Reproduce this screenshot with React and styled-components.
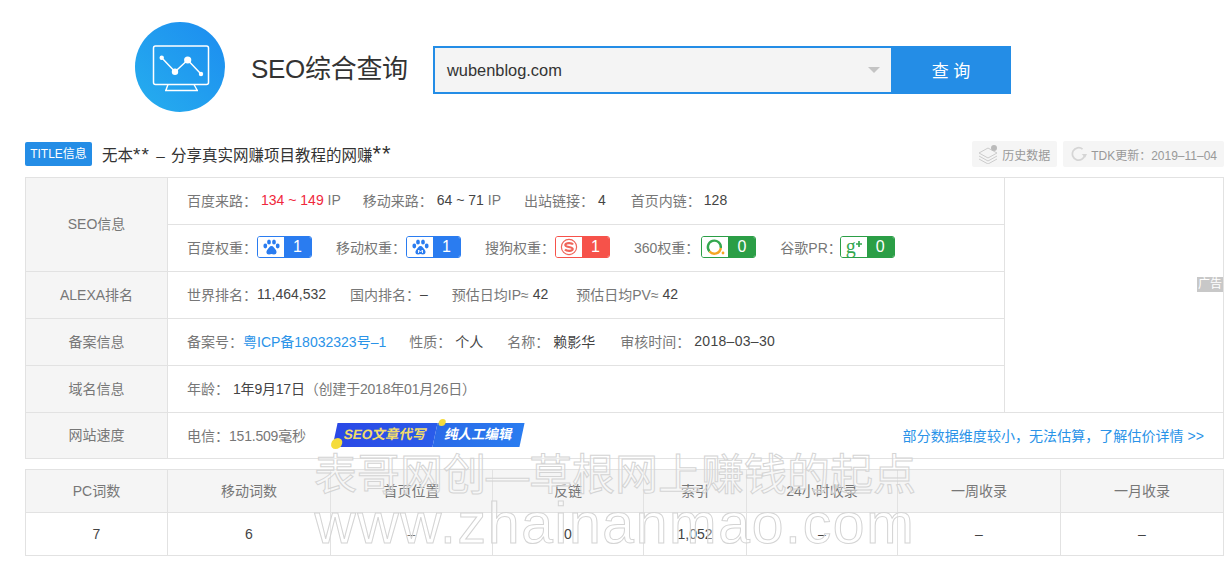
import React from "react";
import styled, { createGlobalStyle } from "styled-components";

const GlobalStyle = createGlobalStyle`
  html, body { margin: 0; padding: 0; background: #fff; }
  body {
    font-family: "Liberation Sans", "Noto Sans CJK SC", sans-serif;
    font-size: 14px;
    color: #666;
  }
`;

const Page = styled.div`
  position: relative;
  width: 1227px;
  height: 561px;
  overflow: hidden;
`;

const Header = styled.header`
  display: flex;
  align-items: center;
  height: 90px;
  padding: 22px 0 0 135px;
`;

const Logo = styled.div`
  width: 90px;
  height: 90px;
  border-radius: 50%;
  background: linear-gradient(45deg, #26aeee 0%, #1c8cf0 100%);
  display: flex;
  align-items: center;
  justify-content: center;
  flex-shrink: 0;
`;

const SiteTitle = styled.h1`
  margin: 3px 26px 0;
  width: 156px;
  font-size: 26px;
  line-height: 32px;
  font-weight: 400;
  color: #333;
  white-space: nowrap;
  letter-spacing: -0.3px;
`;

const SearchBar = styled.div`
  display: flex;
  width: 578px;
  height: 48px;
  margin-top: 6px;
`;

const SearchInput = styled.div`
  position: relative;
  box-sizing: border-box;
  flex: 1;
  display: flex;
  align-items: center;
  padding-left: 12px;
  border: 2px solid #248de6;
  border-right: 0;
  background: #f4f4f4;
  font-size: 16.4px;
  color: #333;
`;

const Caret = styled.span`
  position: absolute;
  right: 11px;
  top: 19px;
  border-style: solid;
  border-width: 6px 6.5px 0;
  border-color: #c4c4c4 transparent transparent;
`;

const SearchButton = styled.div`
  width: 120px;
  display: flex;
  align-items: center;
  justify-content: center;
  padding-bottom: 2px;
  box-sizing: border-box;
  background: #248de6;
  color: #fff;
  font-size: 17px;
`;

const TitleRow = styled.div`
  display: flex;
  align-items: center;
  height: 26px;
  margin: 29px 3px 10px 25px;
`;

const TitleTag = styled.span`
  width: 67px;
  height: 24px;
  border-radius: 2px;
  background: #248de6;
  color: #fff;
  font-size: 12px;
  line-height: 24px;
  text-align: center;
  white-space: nowrap;
`;

const PageTitle = styled.span`
  margin-left: 10px;
  font-size: 15.5px;
  color: #333;
  flex: 1;
  white-space: nowrap;
`;

const Stars = styled.span`
  font-size: ${(p) => p.$size || 19}px;
  line-height: 0;
  letter-spacing: 1px;
`;

const TitleDash = styled.span`
  margin: 0 2px;
`;

const GrayChip = styled.span`
  display: flex;
  align-items: center;
  gap: 4px;
  height: 26px;
  margin-left: ${(p) => p.$gap ?? 6}px;
  padding: 0 7px 0 ${(p) => p.$pad || 6}px;
  border-radius: 2px;
  background: #f5f5f5;
  color: #999;
  font-size: 12px;
  white-space: nowrap;
`;

const InfoTable = styled.div`
  position: relative;
  display: grid;
  grid-template-columns: 142px 836px 1fr;
  margin: 0 3px 0 25px;
  border: solid #e2e2e2;
  border-width: 1px 1px 0 1px;
  box-sizing: border-box;
`;

const RowLabel = styled.div`
  grid-column: 1;
  grid-row: ${(p) => p.$row};
  display: flex;
  align-items: center;
  justify-content: center;
  padding-bottom: 3px;
  background: #f5f5f5;
  border-right: 1px solid #e2e2e2;
  border-bottom: 1px solid #e2e2e2;
  color: #777;
  font-size: 14px;
`;

const Row = styled.div`
  grid-column: ${(p) => (p.$wide ? "2 / 4" : "2")};
  display: flex;
  align-items: center;
  box-sizing: border-box;
  height: ${(p) => p.$h || 47}px;
  padding: 0 19px 2px 19px;
  border-bottom: 1px solid #e2e2e2;
  white-space: nowrap;
`;

const AdSlot = styled.div`
  grid-column: 3;
  grid-row: 1 / 6;
  border-left: 1px solid #e2e2e2;
  border-bottom: 1px solid #e2e2e2;
`;

const AdLabel = styled.span`
  position: absolute;
  right: 0;
  top: 99px;
  width: 26px;
  height: 15px;
  background: #c8c8c8;
  color: #fff;
  font-size: 12px;
  line-height: 15px;
  text-align: center;
`;

const Field = styled.span`
  display: inline-flex;
  align-items: center;
  margin-right: ${(p) => p.$gap ?? 24}px;
  color: #777;
`;

const Value = styled.span`
  margin-left: ${(p) => p.$gap ?? 0}px;
  letter-spacing: ${(p) => p.$spacing || 0}px;
  color: ${(p) => p.$color || "#444"};
`;

const SiteLink = styled.span`
  color: #2a93e8;
`;

const RankBadge = styled.span`
  display: inline-flex;
  box-sizing: border-box;
  width: 55px;
  height: 22px;
  margin-left: ${(p) => p.$offset ?? 0}px;
  border: 1px solid ${(p) => p.$color};
  border-radius: 3px;
  overflow: hidden;
`;

const BadgeIcon = styled.span`
  width: 26px;
  display: flex;
  align-items: center;
  justify-content: center;
  background: #fff;
`;

const BadgeNumber = styled.span`
  flex: 1;
  background: ${(p) => p.$color};
  color: #fff;
  font-size: 16px;
  line-height: 20px;
  text-align: center;
`;

const GoogleG = styled.span`
  font-family: "Liberation Serif", serif;
  font-size: 20px;
  line-height: 20px;
  margin-top: -3px;
  color: #35a84f;
`;

const PlusMark = styled.svg`
  width: 6px;
  height: 6px;
  margin-bottom: 6px;
  fill: #35a84f;
`;

const Promo = styled.span`
  position: relative;
  display: flex;
  width: 187px;
  height: 24px;
  margin-left: 29px;
  transform: skewX(-12deg);
  font-size: 13.5px;
  font-weight: 700;
  line-height: 24px;
`;

const PromoLeft = styled.span`
  width: 100px;
  background: linear-gradient(90deg, #2a48e6, #2a5cea);
  color: #f2dc6a;
  text-align: center;
`;

const PromoRight = styled.span`
  flex: 1;
  background: linear-gradient(90deg, #2a6ae8, #2a7cf0);
  color: #fff;
  text-align: center;
`;

const PromoDot = styled.i`
  position: absolute;
  left: ${(p) => p.$left}px;
  top: ${(p) => p.$top}px;
  width: ${(p) => p.$size}px;
  height: ${(p) => p.$size}px;
  border-radius: 50%;
  background: #f5dc3c;
`;

const EstimateLink = styled.span`
  margin-left: auto;
  color: #2a93e8;
  font-size: 14px;
  letter-spacing: 0.05px;
`;

const StatsTable = styled.div`
  display: grid;
  grid-template-columns: 142px 163px 162px 151px 103px 151px 163px 1fr;
  margin: 10px 3px 0 25px;
  border: solid #e2e2e2;
  border-width: 1px 1px 0 1px;
`;

const StatCell = styled.div`
  display: flex;
  align-items: center;
  justify-content: center;
  box-sizing: border-box;
  height: 43px;
  padding-bottom: ${(p) => (p.$head ? 2 : 0)}px;
  background: ${(p) => (p.$head ? "#f5f5f5" : "#fff")};
  border-bottom: 1px solid #e2e2e2;
  border-right: ${(p) => (p.$last ? 0 : "1px solid #e2e2e2")};
  color: ${(p) => (p.$head ? "#777" : "#444")};
`;

// the site's watermark is stamped over the page
const Watermark = styled.div`
  position: absolute;
  left: 0;
  top: ${(p) => p.$top}px;
  width: 1227px;
  text-align: center;
  box-sizing: border-box;
  padding-left: 3px;
  font-size: ${(p) => p.$size}px;
  line-height: 1;
  letter-spacing: ${(p) => p.$spacing}px;
  color: rgba(255, 255, 255, 0.3);
  -webkit-text-stroke: 1px #d4d4d4;
  white-space: nowrap;
  pointer-events: none;
`;

const MonitorIcon = () => (
  <svg width="60" height="50" viewBox="0 -3 60 50" fill="none" stroke="#fff">
    <rect x="3.500" y="1" width="55" height="38.500" rx="2" strokeWidth="1.500" />
    <path d="M18 39.500l-2 5.500M44 39.500l3 5.500M15 45.500h33" strokeWidth="1.400" />
    <path d="M11.700 12.700L25 26.700 37.700 15 51 29" strokeWidth="1.500" />
    <g fill="#fff" stroke="none">
      <circle cx="11.700" cy="12.700" r="2.200" />
      <circle cx="25" cy="26.700" r="3.200" />
      <circle cx="37.700" cy="15" r="3.600" />
      <circle cx="51" cy="29" r="2.200" />
    </g>
  </svg>
);

const LayersIcon = () => (
  <svg width="20" height="19" viewBox="0 0 20 19" fill="none" stroke="#ccc" strokeWidth="1">
    <path d="M1 8l9-5 9 5-9 5zM1 11l9 5 9-5M1 14l9 5 9-5" />
    <circle cx="16" cy="3" r="3" fill="#bbb" stroke="none" />
  </svg>
);

const RefreshIcon = () => (
  <svg width="16" height="18" viewBox="0 0 18 18" fill="none" stroke="#d5d5d5" strokeWidth="2">
    <path d="M15.500 10A7 7 0 1 1 13 3.500" />
    <path d="M12 9l4 4 2-4z" fill="#d5d5d5" stroke="none" />
  </svg>
);

const PawIcon = ({ mobile }) => (
  <svg width="17" height="17" viewBox="0 0 17 17" fill="#2a7cf0">
    <ellipse cx="2.300" cy="7" rx="1.900" ry="2.400" />
    <ellipse cx="6" cy="3" rx="1.900" ry="2.600" />
    <ellipse cx="11" cy="3" rx="1.900" ry="2.600" />
    <ellipse cx="14.700" cy="7" rx="1.900" ry="2.400" />
    <path d="M8.500 7C6.500 7 6 9 4.500 10.500 3 12 2.800 15.500 6 15.500c1 0 1.500-.4 2.500-.4s1.500.4 2.500.4c3.200 0 3-3.500 1.500-5C11 9 10.500 7 8.500 7z" />
    {mobile && <path d="M6.500 14v-3l2 2 2-2v3" fill="none" stroke="#fff" strokeWidth=".9" />}
  </svg>
);

const SogouIcon = () => (
  <svg width="18" height="18" viewBox="0 0 18 18" fill="none" stroke="#f0655a">
    <circle cx="9" cy="9" r="7.600" strokeWidth="1.200" />
    <path d="M13 6.500C12 4.800 5.800 4.600 5.300 7c-.4 2.600 7.400 1.400 7.400 4 0 2.400-6.200 2.200-7.700.5" strokeWidth="2.200" />
  </svg>
);

const So360Icon = () => (
  <svg width="20" height="18" viewBox="0 0 20 18" fill="none" strokeWidth="2.400">
    <path d="M4.500 13.500A6.500 6.500 0 1 1 15.800 10" stroke="#35a84f" />
    <path d="M15.800 10A6.500 6.500 0 0 1 4.500 13.500" stroke="#f5a623" />
    <circle cx="18" cy="15" r="1.400" fill="#f5a623" stroke="none" />
  </svg>
);

const stats = [
  ["PC词数", "7"],
  ["移动词数", "6"],
  ["首页位置", "–"],
  ["反链", "0"],
  ["索引", "1,052"],
  ["24小时收录", "–"],
  ["一周收录", "–"],
  ["一月收录", "–"],
];

const App = () => (
  <Page>
    <GlobalStyle />
    <Header>
      <Logo>
        <MonitorIcon />
      </Logo>
      <SiteTitle>SEO综合查询</SiteTitle>
      <SearchBar>
        <SearchInput>
          wubenblog.com
          <Caret />
        </SearchInput>
        <SearchButton>查 询</SearchButton>
      </SearchBar>
    </Header>

    <TitleRow>
      <TitleTag>TITLE信息</TitleTag>
      <PageTitle>
        无本<Stars>**</Stars> <TitleDash>–</TitleDash> 分享真实网赚项目教程的网赚<Stars $size={22}>**</Stars>
      </PageTitle>
      <GrayChip>
        <LayersIcon />
        历史数据
      </GrayChip>
      <GrayChip $pad={8}>
        <RefreshIcon />
        TDK更新：2019–11–04
      </GrayChip>
    </TitleRow>

    <InfoTable>
      <RowLabel $row="1 / 3">SEO信息</RowLabel>
      <Row>
        <Field $gap={22}>
          百度来路：<Value $color="#f0283c" $gap={4}>134 ~ 149</Value>&nbsp;IP
        </Field>
        <Field $gap={23}>
          移动来路：<Value $gap={4}>64 ~ 71</Value>&nbsp;IP
        </Field>
        <Field $gap={25}>
          出站链接：<Value $gap={4}>4</Value>
        </Field>
        <Field>
          首页内链：<Value $gap={3}>128</Value>
        </Field>
      </Row>
      <AdSlot />
      <Row>
        <Field>
          百度权重：
          <RankBadge $color="#2a7cf0">
            <BadgeIcon><PawIcon /></BadgeIcon>
            <BadgeNumber $color="#2a7cf0">1</BadgeNumber>
          </RankBadge>
        </Field>
        <Field>
          移动权重：
          <RankBadge $color="#2a7cf0">
            <BadgeIcon><PawIcon mobile /></BadgeIcon>
            <BadgeNumber $color="#2a7cf0">1</BadgeNumber>
          </RankBadge>
        </Field>
        <Field>
          搜狗权重：
          <RankBadge $color="#f6524a">
            <BadgeIcon><SogouIcon /></BadgeIcon>
            <BadgeNumber $color="#f6524a">1</BadgeNumber>
          </RankBadge>
        </Field>
        <Field>
          360权重：
          <RankBadge $color="#2b9e46" $offset={2}>
            <BadgeIcon><So360Icon /></BadgeIcon>
            <BadgeNumber $color="#2b9e46">0</BadgeNumber>
          </RankBadge>
        </Field>
        <Field>
          谷歌PR：
          <RankBadge $color="#2b9e46" $offset={-2}>
            <BadgeIcon>
              <GoogleG>g</GoogleG>
              <PlusMark viewBox="0 0 7 7">
                <path d="M2.500 0h2v2.500H7v2H4.500V7h-2V4.500H0v-2h2.500z" />
              </PlusMark>
            </BadgeIcon>
            <BadgeNumber $color="#2b9e46">0</BadgeNumber>
          </RankBadge>
        </Field>
      </Row>

      <RowLabel $row="3">ALEXA排名</RowLabel>
      <Row>
        <Field>
          世界排名：<Value>11,464,532</Value>
        </Field>
        <Field>
          国内排名：<Value>–</Value>
        </Field>
        <Field $gap={28}>
          预估日均IP≈&nbsp;<Value>42</Value>
        </Field>
        <Field>
          预估日均PV≈&nbsp;<Value>42</Value>
        </Field>
      </Row>

      <RowLabel $row="4">备案信息</RowLabel>
      <Row>
        <Field $gap={23}>
          备案号：<SiteLink>粤ICP备18032323号–1</SiteLink>
        </Field>
        <Field>
          性质：<Value $gap={4}>个人</Value>
        </Field>
        <Field $gap={25}>
          名称：<Value $gap={4}>赖影华</Value>
        </Field>
        <Field>
          审核时间：<Value $gap={4} $spacing={0.3}>2018–03–30</Value>
        </Field>
      </Row>

      <RowLabel $row="5">域名信息</RowLabel>
      <Row>
        <Field>
          年龄：<Value $gap={4} $spacing={-0.2}>1年9月17日</Value>
          <Value $color="#777" $spacing={-0.2}>（创建于2018年01月26日）</Value>
        </Field>
      </Row>

      <RowLabel $row="6">网站速度</RowLabel>
      <Row $wide $h={46}>
        <Field $gap={0}>
          电信：<Value $color="#777" $spacing={-0.2}>151.509毫秒</Value>
        </Field>
        <Promo>
          <PromoLeft>SEO文章代写</PromoLeft>
          <PromoRight>纯人工编辑</PromoRight>
          <PromoDot $left={-2} $top={15} $size={11} />
          <PromoDot $left={101} $top={-4} $size={7} />
        </Promo>
        <EstimateLink>部分数据维度较小，无法估算，了解估价详情 &gt;&gt;</EstimateLink>
      </Row>
      <AdLabel>广告</AdLabel>
    </InfoTable>

    <StatsTable>
      {stats.map(([label], i) => (
        <StatCell key={label} $head $last={i === stats.length - 1}>
          {label}
        </StatCell>
      ))}
      {stats.map(([label, value], i) => (
        <StatCell key={label} $last={i === stats.length - 1}>
          {value}
        </StatCell>
      ))}
    </StatsTable>

    <Watermark $top={454} $size={43} $spacing={0}>
      表哥网创—草根网上赚钱的起点
    </Watermark>
    <Watermark $top={495} $size={57} $spacing={1.7}>
      www.zhainanmao.com
    </Watermark>
  </Page>
);

export default App;
